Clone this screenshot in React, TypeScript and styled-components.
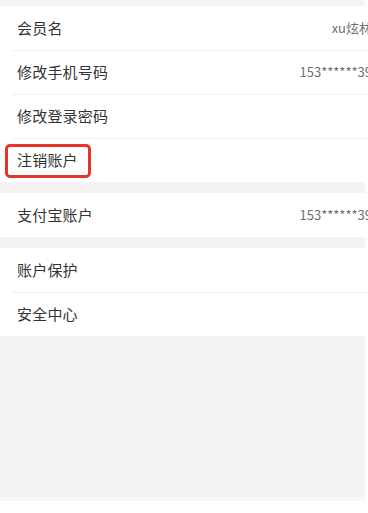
import React from "react";
import styled, { createGlobalStyle } from "styled-components";

const GlobalStyle = createGlobalStyle`
    html, body {
        margin: 0;
        padding: 0;
        background: #ffffff;
        overflow: hidden;
        font-family: "Noto Sans CJK SC", "Noto Sans", sans-serif;
    }
`;

interface IItem {
    label: string;
    value?: string;
    marked?: boolean;
}

const groups: IItem[][] = [
    [
        { label: "会员名", value: "xu炫林" },
        { label: "修改手机号码", value: "153******39" },
        { label: "修改登录密码" },
        { label: "注销账户", marked: true },
    ],
    [{ label: "支付宝账户", value: "153******39" }],
    [{ label: "账户保护" }, { label: "安全中心" }],
];

export default function App() {
    return (
        <>
            <GlobalStyle />
            <Page>
                {groups.map((group, gi) => (
                    <Group key={gi}>
                        {group.map((item) => (
                            <Row key={item.label}>
                                <Label>{item.label}</Label>
                                {item.value && <Value>{item.value}</Value>}
                                {item.marked && <Marker />}
                            </Row>
                        ))}
                    </Group>
                ))}
            </Page>
        </>
    );
}

const Page = styled.div`
    width: 366px;
    height: 501px;
    box-sizing: border-box;
    background: #f3f3f3;
    border-right: 3px solid #f8f8f8;
    border-bottom: 4px solid #f8f8f8;
    padding-top: 6px;
    display: flex;
    flex-direction: column;
    gap: 11px;
`;

const Group = styled.div`
    width: 390px;
    background: #ffffff;
    display: flex;
    flex-direction: column;
`;

const Row = styled.div`
    position: relative;
    height: 44px;
    display: flex;
    align-items: center;
    justify-content: space-between;
    padding: 0 18px 2px 17px;
    box-sizing: border-box;

    & + &::before {
        content: "";
        position: absolute;
        top: 0;
        left: 12px;
        right: 0;
        height: 1px;
        background: #f0f0f0;
    }
`;

const Label = styled.span`
    font-size: 15px;
    color: #333333;
    letter-spacing: 0.2px;
`;

const Value = styled.span`
    font-size: 13px;
    color: #707070;
    white-space: nowrap;
`;

const Marker = styled.div`
    position: absolute;
    left: 5px;
    top: 6px;
    width: 86px;
    height: 34px;
    box-sizing: border-box;
    border: 3px solid #e8332b;
    border-radius: 5px;
`;
